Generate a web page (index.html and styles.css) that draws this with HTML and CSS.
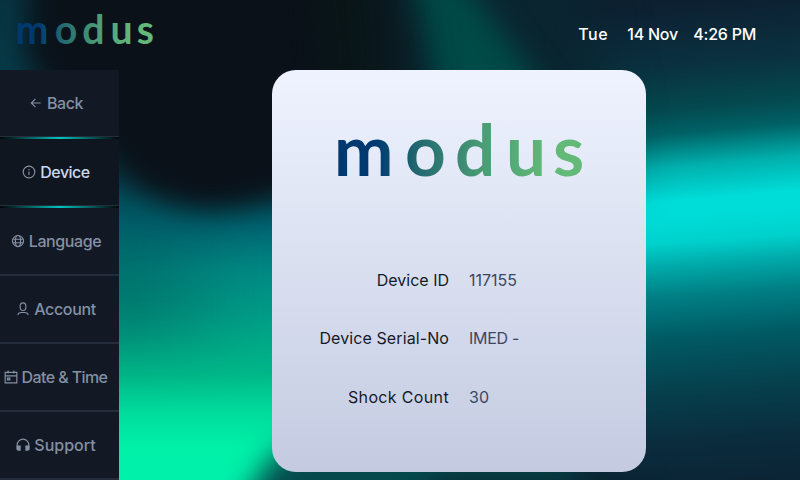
FILE: index.html
```html
<!DOCTYPE html>
<html lang="en">
<head>
<meta charset="utf-8">
<title>Modus device</title>
<link rel="stylesheet" href="styles.css">
</head>
<body>
<svg class="backdrop" viewBox="0 0 800 480" aria-hidden="true">
  <defs>
    <linearGradient id="left" x1="0" y1="0" x2="0" y2="480" gradientUnits="userSpaceOnUse">
      <stop offset="0" stop-color="#073441"/><stop offset=".38" stop-color="#064452"/><stop offset=".47" stop-color="#006572"/>
      <stop offset=".56" stop-color="#008984"/><stop offset=".67" stop-color="#00a088"/><stop offset=".78" stop-color="#00b888"/>
      <stop offset=".86" stop-color="#00dc9c"/><stop offset=".93" stop-color="#00f0a8"/><stop offset="1" stop-color="#00f2aa"/>
    </linearGradient>
    <linearGradient id="upper" x1="0" y1="0" x2="0" y2="480" gradientUnits="userSpaceOnUse">
      <stop offset="0" stop-color="#0d2031"/><stop offset=".13" stop-color="#0a3140"/><stop offset=".22" stop-color="#04494f"/><stop offset=".27" stop-color="#006165"/>
      <stop offset=".34" stop-color="#00b0ad"/><stop offset=".41" stop-color="#00dcd8"/><stop offset="1" stop-color="#00dcd8"/>
    </linearGradient>
    <linearGradient id="lower" x1="0" y1="0" x2="0" y2="480" gradientUnits="userSpaceOnUse">
      <stop offset=".44" stop-color="#00d6d1" stop-opacity="0"/><stop offset=".5" stop-color="#00d0cb"/>
      <stop offset=".55" stop-color="#00a8a8"/><stop offset=".61" stop-color="#007f84"/><stop offset=".7" stop-color="#005963"/>
      <stop offset=".81" stop-color="#063f4c"/><stop offset=".91" stop-color="#0a2d3e"/><stop offset="1" stop-color="#0b2535"/>
    </linearGradient>
    <linearGradient id="shade" x1="110" y1="0" x2="260" y2="0" gradientUnits="userSpaceOnUse">
      <stop offset="0" stop-color="#00403f" stop-opacity=".4"/><stop offset="1" stop-color="#00403f" stop-opacity="0"/>
    </linearGradient>
    <filter id="soft" x="-50%" y="-50%" width="200%" height="200%" color-interpolation-filters="sRGB"><feGaussianBlur stdDeviation="14"/></filter>
    <filter id="wide" x="-50%" y="-50%" width="200%" height="200%" color-interpolation-filters="sRGB"><feGaussianBlur stdDeviation="26"/></filter>
  </defs>
  <rect width="460" height="480" fill="url(#left)"/>
  <rect x="90" y="225" width="180" height="120" fill="url(#shade)" filter="url(#wide)"/>
  <g transform="rotate(-5 720 200)"><rect x="460" y="-60" width="420" height="600" fill="url(#upper)"/></g>
  <g transform="rotate(-4 720 270)"><rect x="460" y="-60" width="420" height="650" fill="url(#lower)"/></g>
  <path d="M230 520L274 455L340 420L500 330L600 520Z" fill="#05494c" filter="url(#soft)"/>
  <path d="M370 550L440 480H640V550Z" fill="#0a202e" filter="url(#soft)"/>
  <path d="M250 -160H560L620 180H350Z" fill="#0a2530" filter="url(#wide)"/>
  <path d="M400 -50H440L560 110H440Z" fill="#004a48" filter="url(#soft)"/>
  <path d="M150 -160H375L405 60L380 180H150Z" fill="#0a1518" filter="url(#wide)"/>
  <path d="M32 -60H305L320 80L330 165Q270 205 210 208Q145 203 104 155L25 60Z" fill="#0a1119" filter="url(#soft)"/>
</svg>
<div class="app">
  <header class="topbar">
    <svg class="logo small" viewBox="0 0 250 58" role="img" aria-label="modus">
      <defs><linearGradient id="brand" x1="0" y1="0" x2="250" y2="0" gradientUnits="userSpaceOnUse"><stop offset=".16" stop-color="#003970"/><stop offset=".34" stop-color="#246b70"/><stop offset=".6" stop-color="#4b9e75"/><stop offset=".85" stop-color="#62b978"/></linearGradient></defs>
      <text class="wordmark" fill="url(#brand)" y="52" x="-1 70 120 171 219">modus</text>
    </svg>
    <div class="clock"><span class="day">Tue</span><span class="date">14 Nov</span><span class="time">4:26 PM</span></div>
  </header>
  <div class="content">
    <nav class="sidebar">
      <a class="item"><svg class="icon" viewBox="0 0 24 24"><path d="M20 12H5M11 5L4 12L11 19"/></svg><span>Back</span></a>
      <a class="item active"><svg class="icon" viewBox="0 0 24 24"><circle cx="12" cy="12" r="10"/><path d="M12 11V17M12 7V9"/></svg><span>Device</span></a>
      <a class="item lit"><svg class="icon" viewBox="0 0 24 24"><circle cx="12" cy="12" r="9.5"/><ellipse cx="12" cy="12" rx="4.5" ry="9.5"/><path d="M3 9H21M3 15H21"/></svg><span class="language">Language</span></a>
      <a class="item"><svg class="icon" viewBox="0 0 24 24"><ellipse cx="12" cy="8" rx="5" ry="6.5"/><path d="M3 22Q4 18 9 18H15Q20 18 21 22"/></svg><span class="account">Account</span></a>
      <a class="item clipped"><svg class="icon" viewBox="0 0 24 24"><path d="M2 4H22V22H2ZM2 10H22M7 1V6M17 1V6"/><path d="M6 14H10V17H6Z"/></svg><span class="datetime">Date &amp; Time</span></a>
      <a class="item"><svg class="icon" viewBox="0 0 24 24"><path d="M2 20V12A10 10 0 0 1 22 12V20"/><path class="solid" d="M1 13H8V22H4Q1 22 1 19ZM16 13H23V19Q23 22 20 22H16Z"/></svg><span class="support">Support</span></a>
    </nav>
    <main class="card">
      <svg class="logo big" viewBox="0 0 250 58" role="img" aria-label="modus"><text class="wordmark" fill="url(#brand)" y="52" x="-1 70 120 171 218">modus</text></svg>
      <dl class="details">
        <dt>Device ID</dt><dd>117155</dd>
        <dt class="serial">Device Serial-No</dt><dd class="imed">IMED -</dd>
        <dt class="shock">Shock Count</dt><dd>30</dd>
      </dl>
    </main>
  </div>
</div>
</body>
</html>
```
FILE: styles.css
```css
* { box-sizing: border-box; }
body { margin: 0; width: 800px; height: 480px; overflow: hidden; background: #0a1119; font-family: Inter, sans-serif; font-size: 16px; }
.backdrop { position: absolute; inset: 0; width: 800px; height: 480px; z-index: -1; }
.app { height: 480px; display: flex; flex-direction: column; }
.topbar { height: 70px; flex: none; display: flex; justify-content: space-between; padding: 15px 44px 0 15px; }
.logo { display: block; overflow: visible; }
.small { width: 140px; height: 32px; }
.big { width: 250px; height: 58px; margin: 54px 0 0 63px; }
.wordmark { font-family: Lato, sans-serif; font-weight: 700; font-size: 71px; }
.clock { display: flex; color: #fff; font-weight: 500; line-height: 20px; padding-top: 9px; letter-spacing: -.25px; white-space: nowrap; }
.day { width: 49px; letter-spacing: .5px; }
.date { width: 66px; }
.content { flex: 1; min-height: 0; display: flex; }
.sidebar { width: 119px; flex: none; background: #121824; overflow: hidden; }
.item { position: relative; display: flex; align-items: center; justify-content: center; gap: 4px; height: 68px; padding-right: 7px; border-bottom: 2px solid #232d3c; color: #8490a3; font-weight: 500; letter-spacing: -.5px; white-space: nowrap; line-height: 20px; }
.item:first-child { border-bottom: 1px solid #232d3c; height: 67px; }
.active { height: 69px; padding-top: 2px; border-bottom-width: 1px; background: #10161f; color: #cbd9ec; }
.lit { height: 70px; padding-top: 2px; }
.active::before, .lit::before { content: ""; position: absolute; top: 0; left: 0; width: 100%; height: 2px; background: linear-gradient(90deg, #010406, #00c4c0 50%, #010406); }
.clipped { padding-right: 8px; }
.language { letter-spacing: -.4px; }
.account { letter-spacing: -.35px; }
.datetime { letter-spacing: -.6px; }
.support { letter-spacing: 0; }
.icon { width: 14px; height: 14px; flex: none; fill: none; stroke: #8490a3; stroke-width: 2; }
.icon .solid { fill: #8490a3; stroke: none; }
.card { width: 374px; height: 402px; margin-left: 153px; border-radius: 24px; background: linear-gradient(#eff3ff, #c4cbe1); }
.details { margin: 69px 0 0; display: grid; grid-template-columns: 177px 1fr; column-gap: 20px; grid-template-rows: 58px 58px 59px; align-items: center; line-height: 20px; letter-spacing: 0; }
.details dt { text-align: right; color: #141a25; white-space: nowrap; }
.details dd { margin: 0; color: #3b4760; }
.details .serial { letter-spacing: .1px; }
.details .shock { letter-spacing: .35px; }
.details .imed { letter-spacing: -.3px; }
```
